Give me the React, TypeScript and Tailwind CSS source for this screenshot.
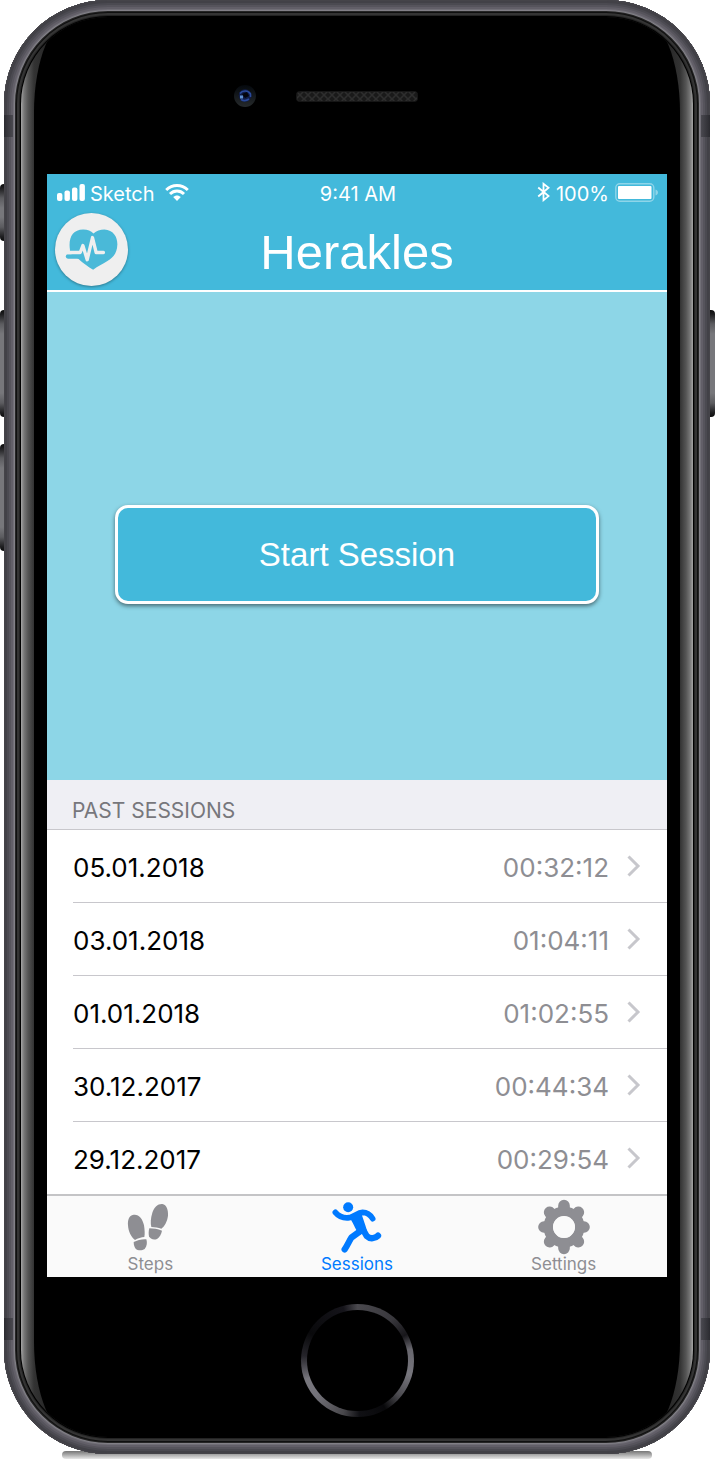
import React from "react";

type Session = { date: string; duration: string };

const sessions: Session[] = [
  { date: "05.01.2018", duration: "00:32:12" },
  { date: "03.01.2018", duration: "01:04:11" },
  { date: "01.01.2018", duration: "01:02:55" },
  { date: "30.12.2017", duration: "00:44:34" },
  { date: "29.12.2017", duration: "00:29:54" },
];

function SignalIcon() {
  return (
    <svg width="29" height="17" viewBox="0 0 29 17" fill="currentColor" aria-hidden="true">
      <rect x="0" y="9" width="5.4" height="8" rx="2" />
      <rect x="7.5" y="6.5" width="5.4" height="10.5" rx="2" />
      <rect x="15" y="3.5" width="5.4" height="13.5" rx="2" />
      <rect x="22.5" y="0" width="5.4" height="17" rx="2" />
    </svg>
  );
}

function WifiIcon() {
  return (
    <svg width="24" height="17" viewBox="0 0 24 17" aria-hidden="true">
      <g fill="none" stroke="currentColor" strokeWidth="2.9">
        <path d="M1.2 6C7.3 0 16.7 0 22.8 6" />
        <path d="M5 10C9 6 15 6 19 10" />
      </g>
      <path d="M8.2 13.1C10.4 11 13.6 11 15.8 13.1L12 17Z" fill="currentColor" />
    </svg>
  );
}

function BluetoothIcon() {
  return (
    <svg width="13" height="20" viewBox="0 0 12 19" fill="none" stroke="currentColor" strokeWidth="1.7" aria-hidden="true">
      <path d="M1 5.2L10.8 13.4L6 17.3V1.7L10.8 5.5L1 13.8" />
    </svg>
  );
}

function BatteryIcon() {
  return (
    <svg width="44" height="19" viewBox="0 0 44 19" aria-hidden="true">
      <rect x="0.8" y="0.8" width="38" height="17.4" rx="4" fill="none" stroke="white" strokeOpacity="0.4" strokeWidth="1.4" />
      <rect x="3" y="3" width="33.5" height="13" rx="1" fill="white" />
      <path d="M40.5 6.5C43.8 7.5 43.8 11.5 40.5 12.5Z" fill="white" fillOpacity="0.4" />
    </svg>
  );
}

function HeartLogo() {
  return (
    <svg className="h-full w-full" viewBox="45 128 220 220" aria-hidden="true">
      <path
        d="M90 238C85 205 97 178 130 178C144 178 153 182 161 190C170 182 181 178 194 178C220 179 233 200 233 222C232 248 222 261 203 273C188 283 174 289 160 299C145 290 130 280 115 266L90 250Z"
        fill="#4ab9d8"
      />
      <path
        d="M84 259H117"
        fill="none"
        stroke="#4ab9d8"
        strokeWidth="13"
        strokeLinecap="round"
      />
      <path
        d="M84 247H121L129 226L142 269L158 202L169 247H191"
        fill="none"
        stroke="#efefef"
        strokeWidth="10"
        strokeLinecap="round"
        strokeLinejoin="round"
      />
    </svg>
  );
}

function StepsIcon() {
  return (
    <svg width="46" height="48" viewBox="80 41 138 144" fill="currentColor" aria-hidden="true">
      <path d="M97 77C113 72 127 87 131 108C133 122 134 134 132 143C123 144 113 147 104 152C92 143 84 126 83 108C82 92 86 80 97 77Z" />
      <path d="M100 158C111 153 124 149 138 150C141 160 140 171 133 179C125 184 112 184 106 178C102 173 100 166 100 158Z" />
      <path d="M186 44C199 46 204 62 203 79C201 96 192 112 183 118C174 116 163 113 153 113C150 101 151 87 156 70C162 53 173 43 186 44Z" />
      <path d="M147 117C159 117 172 119 185 124C183 134 178 144 170 149C160 153 149 149 146 141C144 133 145 125 147 117Z" />
    </svg>
  );
}

function RunnerIcon() {
  return (
    <svg width="50" height="51" viewBox="695 35 150 153" aria-hidden="true">
      <circle cx="743.5" cy="51" r="15" fill="currentColor" />
      <g fill="none" stroke="currentColor" strokeLinecap="round" strokeLinejoin="round" strokeWidth="17">
        <path d="M705 66C715 78 731 84 747 82C763 79 771 67 787 66C803 66 811 75 817 85" />
        <path d="M783 120L753 142C746 153 741 166 733 177" strokeWidth="19" />
        <path d="M787 116L799 137C810 148 825 144 833 136" strokeWidth="19" />
      </g>
      <path d="M749 84L783 66C785 80 794 98 800 122L779 133C766 123 762 103 749 84Z" fill="currentColor" />
    </svg>
  );
}

function GearIcon() {
  return (
    <svg width="54" height="56" viewBox="323 30 162 168" aria-hidden="true">
      <g stroke="currentColor" fill="none">
        <circle cx="404" cy="114" r="47" strokeWidth="29" />
        <g strokeWidth="35" strokeLinecap="round">
          <path d="M404 64V50M404 164V178M354 114H344M454 114H464M369 79L361 70M439 79L447 70M369 149L361 158M439 149L447 158" />
        </g>
      </g>
      <circle cx="404" cy="114" r="33" fill="#fafafa" />
    </svg>
  );
}

function Chevron() {
  return (
    <svg width="14" height="22" viewBox="0 0 14 22" fill="none" stroke="#c7c7cc" strokeWidth="3" aria-hidden="true">
      <path d="M1.5 1.5L11 11L1.5 20.5" />
    </svg>
  );
}

function StatusBar() {
  return (
    <div className="grid h-9 grid-cols-[1fr_auto_1fr] items-center pl-[10px] pr-2 text-[20px] leading-6">
      <div className="flex items-center gap-1">
        <SignalIcon />
        <span className="pt-1 pr-1.5">Sketch</span>
        <WifiIcon />
      </div>
      <span className="pt-1">9:41 AM</span>
      <div className="flex items-center justify-end gap-1.5">
        <BluetoothIcon />
        <span className="pt-1">100%</span>
        <BatteryIcon />
      </div>
    </div>
  );
}

function TopBar() {
  return (
    <header className="border-b-2 border-white bg-[#43b9db] text-white">
      <StatusBar />
      <div className="grid grid-cols-[73px_1fr_73px] items-center px-2 pt-[3px] pb-1">
        <a href="#home" aria-label="Herakles home" className="h-[73px] w-[73px] rounded-full bg-[#efefef] shadow-[0_1px_3px_rgba(0,0,0,0.35)]">
          <HeartLogo />
        </a>
        <h1 className="pt-1 text-center font-['Liberation_Sans',Arial,sans-serif] text-[49px] leading-[56px]">Herakles</h1>
      </div>
    </header>
  );
}

function PastSessions() {
  return (
    <section className="bg-white">
      <h2 className="border-b border-[#c8c7cc] bg-[#efeff4] px-[25px] pt-4 pb-1 text-[21px] leading-[29px] text-[#77777c]">
        PAST SESSIONS
      </h2>
      <ul>
        {sessions.map((s) => (
          <li key={s.date} className="group pl-[26px]">
            <a
              href={"#" + s.date}
              className="flex h-[73px] items-center border-b border-[#c8c7cc] pr-[26px] text-[26px] group-last:h-[72px] group-last:border-b-0"
            >
              <span className="flex-1 pt-0.5 text-black">{s.date}</span>
              <span className="pt-0.5 pr-[18px] text-[#8e8e93]">{s.duration}</span>
              <Chevron />
            </a>
          </li>
        ))}
      </ul>
    </section>
  );
}

function Tab({ label, icon, active = false }: { label: string; icon: React.ReactNode; active?: boolean }) {
  return (
    <a
      href={"#" + label.toLowerCase()}
      aria-current={active ? "page" : undefined}
      className={"flex flex-col items-center " + (active ? "text-[#007aff]" : "text-[#8e8e93]")}
    >
      <span className="flex h-[58px] items-center pt-1">{icon}</span>
      <span className="text-[17px] leading-5">{label}</span>
    </a>
  );
}

function TabBar() {
  return (
    <nav className="grid h-[83px] grid-cols-3 border-t-2 border-[#c4c4c6] bg-[#fafafa]">
      <Tab label="Steps" icon={<StepsIcon />} />
      <Tab label="Sessions" icon={<RunnerIcon />} active />
      <Tab label="Settings" icon={<GearIcon />} />
    </nav>
  );
}

function AppScreen() {
  return (
    <div className="bg-white">
      <TopBar />
      <main>
        <div className="bg-[#8dd6e7] px-[68px] pt-[213px] pb-[176px]">
          <button
            type="button"
            className="h-[99px] w-full rounded-[13px] border-[3px] border-white bg-[#43b9db] font-['Liberation_Sans',Arial,sans-serif] text-[33px] text-white shadow-[0_2px_4px_rgba(0,0,0,0.5)]"
          >
            Start Session
          </button>
        </div>
        <PastSessions />
      </main>
      <TabBar />
    </div>
  );
}

function Earpiece() {
  return (
    <div className="grid h-[157px] grid-cols-[1fr_122px_1fr] items-center">
      <div className="flex justify-end pr-10">
        <svg width="22" height="22" viewBox="0 0 22 22" aria-hidden="true">
          <defs>
            <linearGradient id="lens" x1="0" y1="0" x2="0" y2="1">
              <stop offset="0" stopColor="#04080d" />
              <stop offset="1" stopColor="#262a2c" />
            </linearGradient>
          </defs>
          <circle cx="11" cy="11" r="11" fill="url(#lens)" />
          <circle cx="11" cy="10.5" r="6.3" fill="#101d48" />
          <path d="M6 8.5A6 5.4 0 0 1 16.5 9V12M7 14.5Q11 17 15 14" fill="none" stroke="#29499a" strokeWidth="1.6" />
          <path d="M8 9L13 7L15 11L11 13Z" fill="#03050d" />
          <rect x="6" y="10.5" width="3" height="3" fill="#5e8fcf" />
        </svg>
      </div>
      <svg className="mt-0.5" width="122" height="11" viewBox="0 0 122 11" aria-hidden="true">
        <defs>
          <pattern id="mesh" width="8" height="8" patternUnits="userSpaceOnUse">
            <rect width="8" height="8" fill="#1a1a1a" />
            <path d="M0 0L8 8M8 0L0 8" stroke="#2e2e2e" strokeWidth="1.5" />
          </pattern>
        </defs>
        <rect x="0.5" y="0.5" width="121" height="10" rx="3" fill="url(#mesh)" stroke="#161616" />
      </svg>
    </div>
  );
}

const sideKey =
  "absolute w-[6px] bg-[linear-gradient(to_bottom,#0c0c0c_0,#1c1c1e_4px,#5c5c60_14px,#77777b_24px,#77777b_calc(100%-24px),#5c5c60_calc(100%-14px),#1c1c1e_calc(100%-4px),#0c0c0c_100%)]";
const band = "absolute h-[22px] w-[9px] bg-linear-to-r";

export default function App() {
  return (
    <div className="bg-white pb-1.5 font-[Inter,'Liberation_Sans',sans-serif]">
      <div className="relative ml-1 mr-1.5">
        <span className={sideKey + " -left-1 top-[184px] h-[57px] rounded-l-sm"} />
        <span className={sideKey + " -left-1 top-[310px] h-[107px] rounded-l-sm"} />
        <span className={sideKey + " -left-1 top-[444px] h-[107px] rounded-l-sm"} />
        <span className={sideKey + " -right-[5px] top-[310px] h-[107px] rounded-r-sm"} />
        <span className="absolute inset-x-[58px] -bottom-[5px] h-2 rounded-full bg-linear-to-b from-[#777] to-[#e8e8e8]" />

        <div className="relative overflow-hidden rounded-[104px] bg-black p-[17px] shadow-[inset_0_0_0_1px_#454449,inset_0_0_0_3px_#424147,inset_0_0_0_5px_#4b4a51,inset_0_0_0_7px_#56545c,inset_0_0_0_9px_#625f68,inset_0_0_0_10px_#716f77,inset_0_0_0_11px_#828087,inset_0_0_0_12px_#252525,inset_0_0_0_13px_#101010,inset_0_0_0_15px_#343434,inset_0_0_0_16px_#232323]">
          <span className={band + " left-0 top-[115px] from-[#2b2b30] to-[#4a4950]"} />
          <span className={band + " right-0 top-[115px] from-[#4a4950] to-[#2b2b30]"} />
          <span className={band + " bottom-[114px] left-0 from-[#2b2b30] to-[#4a4950]"} />
          <span className={band + " bottom-[114px] right-0 from-[#4a4950] to-[#2b2b30]"} />

          <div className="overflow-hidden rounded-[87px] bg-[linear-gradient(to_right,#a5a5a5_0,#777_3px,#555_7px,#333_13px,#222_30px,#000_50%,#222_calc(100%-30px),#333_calc(100%-13px),#555_calc(100%-7px),#777_calc(100%-3px),#a5a5a5_100%)] px-[13px]">
            <div className="rounded-[40px/95px] bg-black px-[13px]">
              <Earpiece />
              <AppScreen />
              <div className="flex justify-center pt-[27px] pb-5">
                <button
                  type="button"
                  aria-label="Home"
                  className="h-[113px] w-[113px] rounded-full bg-[conic-gradient(#4a494e_0deg,#39383d_40deg,#17161a_62deg,#67666d_78deg,#77767d_105deg,#4c4b50_130deg,#08080a_150deg,#101014_178deg,#48474b_195deg,#74737a_230deg,#77767d_250deg,#25242a_275deg,#09090b_300deg,#15141a_345deg,#4a494e_360deg)] p-[6px]"
                >
                  <span className="block h-full w-full rounded-full bg-black" />
                </button>
              </div>
            </div>
          </div>
        </div>
      </div>
    </div>
  );
}
